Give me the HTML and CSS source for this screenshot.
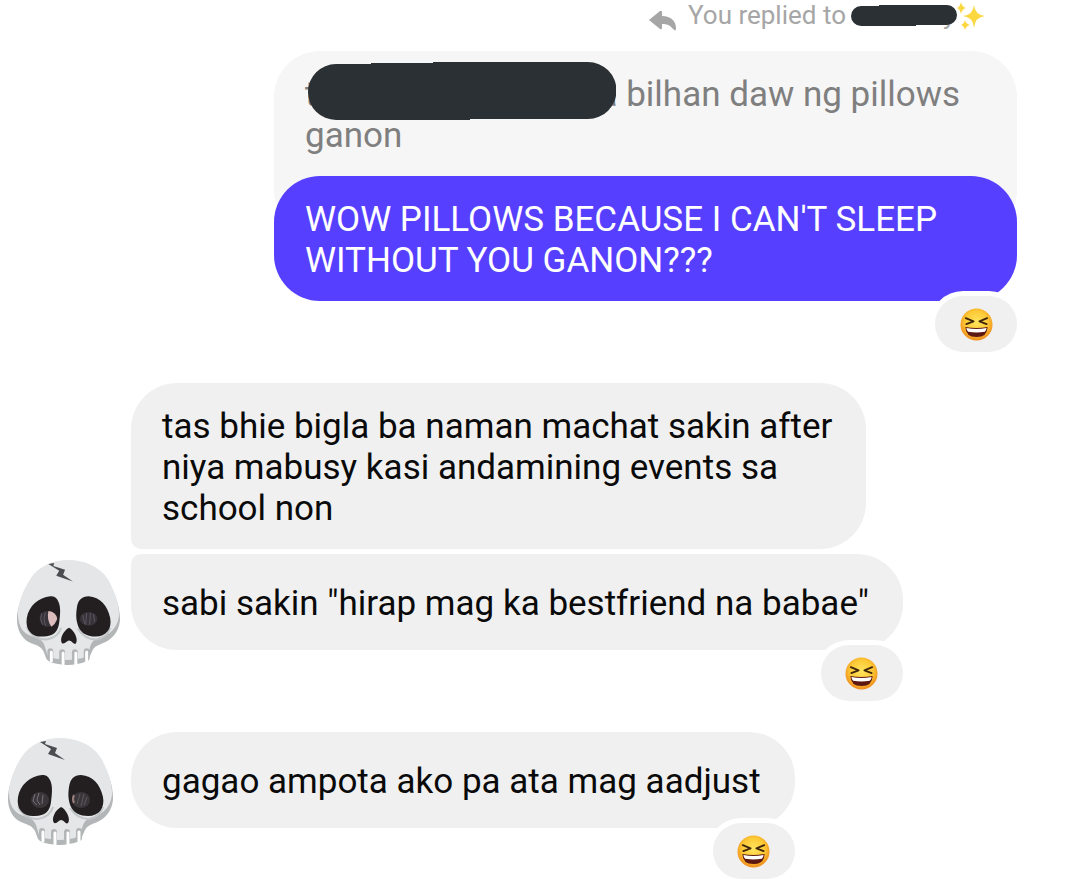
FILE: index.html
```html
<!DOCTYPE html>
<html lang="fil">
<head>
    <meta charset="UTF-8">
    <meta name="viewport" content="width=device-width, initial-scale=1.0">
    <title>Chat</title>
    <link rel="stylesheet" href="styles.css">
</head>
<body>

    <!-- Shared drawings -->
    <svg class="defs" aria-hidden="true">
        <defs>
            <radialGradient id="face" cx="50%" cy="42%" r="58%">
                <stop offset="0" stop-color="#ffe45e"/>
                <stop offset="0.6" stop-color="#fdc935"/>
                <stop offset="1" stop-color="#ee8b1c"/>
            </radialGradient>
            <symbol id="laugh" viewBox="0 0 34 34">
                <circle cx="17" cy="17" r="16.5" fill="url(#face)"/>
                <path d="M6 10.5 14 13.8 6.5 16.5M28 10.5 20 13.8l7.5 2.7" fill="none" stroke="#40270c" stroke-width="1.9" stroke-linecap="round" stroke-linejoin="round"/>
                <path d="M5.5 19.5Q17 21.5 28.5 19.5 28 30 17 30 6 30 5.5 19.5Z" fill="#5b1710"/>
                <path d="M6.6 20.6Q17 22.6 27.4 20.6 27 23.8 25.6 24.5 17 26 8.4 24.5 7 23.8 6.6 20.6Z" fill="#fff"/>
            </symbol>
            <symbol id="skull" viewBox="0 0 105 108">
                <path d="M52 3C20 3 0 38 0 62c0 9 4 18 11 22 7 4 12 3 16 10l3 8q3 4 12 5 10 2 19 0 9-1 12-5l4-9c3-6 10-6 16-10 8-5 12-14 12-22C105 35 85 3 52 3Z" fill="#b3b6b7"/>
                <path d="M52 1C36 1 22 7 13 21 6 32 1 45 1 56c0 9 3 17 10 21 8 4 14 3 17 11l3 10q3 3 11 4 10 2 19 0 8-1 11-4l3-10c3-8 10-7 17-11 8-5 12-13 12-21 0-12-5-24-11-35C84 7 68 1 52 1Z" fill="#e4e6e7"/>
                <path d="M34 101v-7M46 103v-8M59 103v-8M71 101v-7" fill="none" stroke="#b3b6b7" stroke-width="6" stroke-linecap="round"/>
                <path d="M35 104V95M47 107V96M60 107V96M71 104V95" fill="none" stroke="#fff" stroke-width="3" stroke-linecap="round"/>
                <path d="M10 69q6 13 20 13 12-2 15-12M62 71q7 11 19 11 11-2 14-12" fill="none" stroke="#c3c6c8" stroke-width="2"/>
                <path d="M34 38C22 39 12 48 10 60c-2 13 6 20 17 19 10 0 15-5 16-14 1-8 2-16-1-22-2-4-4-5-8-5ZM73 38c-7 0-11 4-12 12-1 7-1 13 2 20 3 6 9 9 17 9 11 0 17-8 15-19-3-13-10-21-22-22Z" fill="#231f20"/>
                <path d="M53 70c-6 3-10 12-7 16 3 1 5-3 7-3 3 0 5 5 7 3 3-4-2-14-7-16Z" fill="#231f20"/>
                <path d="M32 5l6-1-1 3 12 4-2 5 10 7-17-6 3-5Z" fill="#4b4e50"/>
            </symbol>
        </defs>
    </svg>

    <main class="chat">

        <section class="row sent">
            <p class="reply-note">
                <svg class="reply-icon" viewBox="0 0 28 20" aria-hidden="true">
                    <path d="M0 9 11 0q2-1 2 1v4c9 0 14 5 14 12 0 3-1 3-3 1-3-4-6-5-11-5v4q0 2-2 1Z" fill="#a6a6a6"/>
                </svg>
                <span>You replied to</span>
                <svg class="redact-name" viewBox="0 0 106 21" aria-hidden="true">
                    <path d="M10 1h18V0h68a10 10 0 0 1 0 20H65v1H10A10 10 0 0 1 10 1Z" fill="#2b3034"/>
                </svg>
                <span class="name-end">y</span>
                <svg class="sparkles" viewBox="0 0 28 28" aria-hidden="true">
                    <path d="M17 3q1 10 11 11-10 1-11 12Q16 15 6 14 16 13 17 3ZM4 0q1 5 5 6-4 1-5 6Q3 7 0 6 3 5 4 0ZM8 18q1 4 5 5-4 1-5 5-1-4-4-5 3-1 4-5Z" fill="#fbd740"/>
                </svg>
            </p>
            <div class="quote">t<svg class="redact" viewBox="0 0 308 58" aria-hidden="true"><path d="M28 2h35V1h62V0h155a28 28 0 0 1 0 57H162v1H28A28 28 0 0 1 28 2Z" fill="#2b3034"/></svg>a bilhan daw ng pillows<br>ganon</div>
            <div class="bubble mine">WOW PILLOWS BECAUSE I CAN'T SLEEP<br>WITHOUT YOU GANON???</div>
            <button class="reaction" aria-label="Reactions"><svg class="emoji"><use href="#laugh"/></svg></button>
        </section>

        <section class="row received joined">
            <div class="avatar-cell"></div>
            <div class="messages">
                <div class="bubble first">tas bhie bigla ba naman machat sakin after<br>niya mabusy kasi andamining events sa<br>school non</div>
            </div>
        </section>

        <section class="row received">
            <div class="avatar-cell inset">
                <svg class="avatar small" viewBox="0 0 105 108" role="img" aria-label="Skull">
                    <use href="#skull"/>
                    <ellipse cx="31" cy="61" rx="8" ry="8" fill="#38333a"/>
                    <path d="M25 55q-2 6 1 12M29 54q-3 7 0 14" fill="none" stroke="#5b5560"/>
                    <path d="M32 53q8 1 9 8-2 6-6 8-5-7-3-16Z" fill="#dcbcbc"/>
                    <ellipse cx="73" cy="61" rx="9" ry="7" fill="#38333a"/>
                    <path d="M67 57l2 9M71 55l-1 12M75 55l-1 12M78 56l1 8" fill="none" stroke="#5b5560"/>
                </svg>
            </div>
            <div class="messages">
                <div class="bubble last">sabi sakin "hirap mag ka bestfriend na babae"</div>
                <button class="reaction" aria-label="Reactions"><svg class="emoji"><use href="#laugh"/></svg></button>
            </div>
        </section>

        <section class="row received">
            <div class="avatar-cell">
                <svg class="avatar" viewBox="0 0 105 108" role="img" aria-label="Skull">
                    <use href="#skull"/>
                    <ellipse cx="32" cy="63" rx="9" ry="8" fill="#3a3539"/>
                    <path d="M27 57l-2 7 4 4M31 56l-2 7 3 5M35 58l-1 9" fill="none" stroke="#77727a"/>
                    <ellipse cx="73" cy="63" rx="9" ry="8" fill="#3a3539"/>
                    <path d="M66 58q-2 4 0 8" fill="none" stroke="#987f7c" stroke-width="2"/>
                    <path d="M72 57l-3 10M76 57l-3 12M79 60l-3 8" fill="none" stroke="#5f5960"/>
                </svg>
            </div>
            <div class="messages">
                <div class="bubble">gagao ampota ako pa ata mag aadjust</div>
                <button class="reaction" aria-label="Reactions"><svg class="emoji"><use href="#laugh"/></svg></button>
            </div>
        </section>

    </main>

</body>
</html>
```
FILE: styles.css
```css
* {
    box-sizing: border-box;
}
body {
    margin: 0;
    background-color: white;
    font-family: Roboto, sans-serif;
    font-size: 35px;
    line-height: 41px;
    color: #0a0a0a;
}
.defs {
    position: absolute;
    width: 0;
    height: 0;
}
.chat {
    display: flex;
    flex-direction: column;
}
.row {
    display: flex;
    margin-bottom: 31px;
}
.joined {
    margin-bottom: 5px;
}
.sent {
    flex-direction: column;
    align-items: flex-end;
    padding-right: 61px;
}

/* Reply header */
.reply-note {
    display: flex;
    align-items: center;
    height: 31px;
    margin: 0 32px 20px 0;
    font-size: 26px;
    color: #a6a6a6;
}
.reply-icon {
    width: 28px;
    height: 20px;
    margin: 10px 11px 0 0;
}
.redact-name {
    position: relative;
    z-index: 1;
    width: 106px;
    height: 21px;
    margin-left: 5px;
}
.name-end {
    width: 14px;
    margin-left: -14px;
}
.sparkles {
    width: 28px;
    height: 28px;
}

/* Bubbles */
.quote {
    width: 743px;
    max-width: 100%;
    padding: 23px 31px 80px;
    margin-bottom: -60px;
    border-radius: 46px;
    background-color: #f6f6f6;
    color: #7f7f7f;
}
.redact {
    position: relative;
    width: 308px;
    height: 58px;
    margin: -17px -18px -5px -8px;
    vertical-align: middle;
}
.bubble {
    display: flex;
    align-items: center;
    min-height: 96px;
    padding: 23px 34px 20px 31px;
    border-radius: 46px;
    background-color: #f0f0f0;
}
.mine {
    width: 743px;
    max-width: 100%;
    background-color: #563fff;
    color: white;
}
.first {
    border-bottom-left-radius: 10px;
}
.last {
    border-top-left-radius: 10px;
}
.messages {
    display: flex;
    flex-direction: column;
    align-items: flex-end;
}

/* Reactions */
.reaction {
    display: flex;
    align-items: center;
    justify-content: center;
    position: relative;
    width: 82px;
    height: 56px;
    margin-top: -5px;
    padding: 0;
    border: none;
    border-radius: 28px;
    background-color: #f0f0f0;
    box-shadow: 0 0 0 5px white;
    cursor: pointer;
}
.emoji {
    width: 33px;
    height: 33px;
}

/* Avatars */
.avatar-cell {
    flex: none;
    width: 131px;
    padding: 5px 0 0 8px;
}
.inset {
    padding-left: 17px;
}
.avatar {
    display: block;
    width: 105px;
    height: 108px;
}
.small {
    width: 103px;
    height: 106px;
}
```
